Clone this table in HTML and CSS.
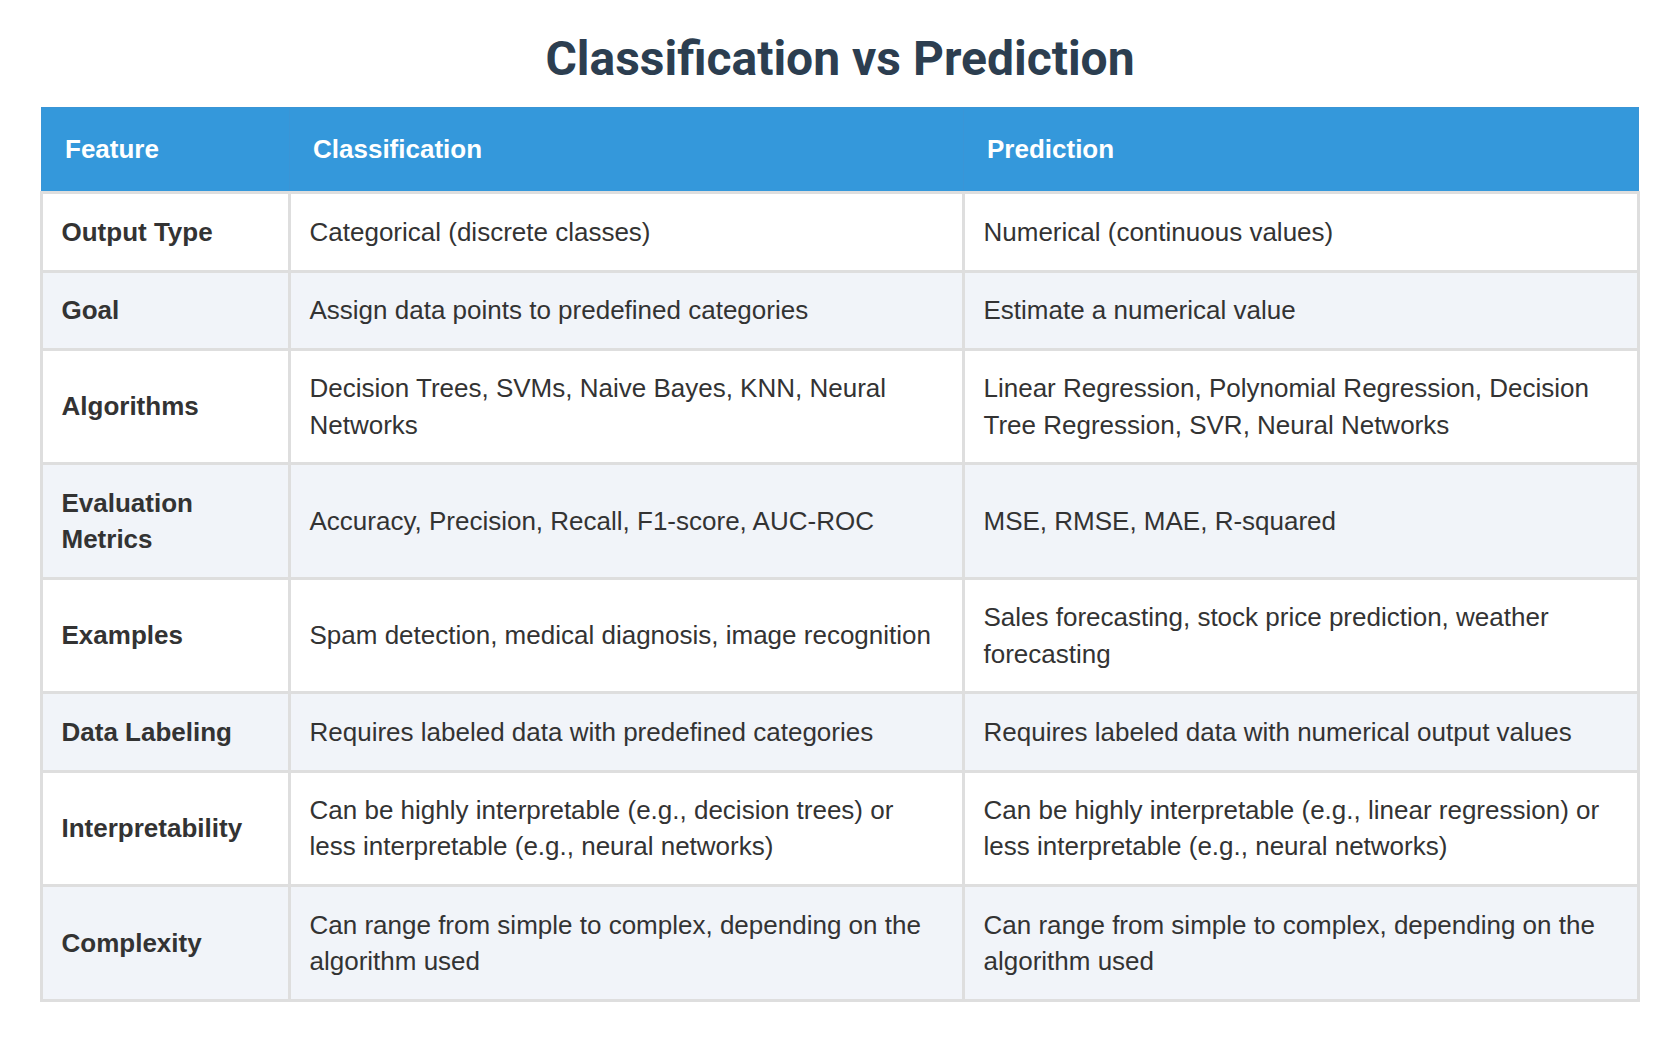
FILE: index.html
```html
<!DOCTYPE html>
<html lang="en">
<head>
<meta charset="utf-8">
<title>Classification vs Prediction</title>
<link rel="stylesheet" href="styles.css">
</head>
<body>
<div class="page">
  <h1 class="title">Classification vs Prediction</h1>
  <table class="cmp">
    <colgroup>
      <col class="c1">
      <col class="c2">
      <col class="c3">
    </colgroup>
    <thead>
      <tr><th>Feature</th><th>Classification</th><th>Prediction</th></tr>
    </thead>
    <tbody>
      <tr><td class="lbl">Output Type</td><td>Categorical (discrete classes)</td><td>Numerical (continuous values)</td></tr>
      <tr><td class="lbl">Goal</td><td>Assign data points to predefined categories</td><td>Estimate a numerical value</td></tr>
      <tr><td class="lbl">Algorithms</td><td>Decision Trees, SVMs, Naive Bayes, KNN, Neural Networks</td><td>Linear Regression, Polynomial Regression, Decision Tree Regression, SVR, Neural Networks</td></tr>
      <tr><td class="lbl">Evaluation Metrics</td><td>Accuracy, Precision, Recall, F1-score, AUC-ROC</td><td>MSE, RMSE, MAE, R-squared</td></tr>
      <tr><td class="lbl">Examples</td><td>Spam detection, medical diagnosis, image recognition</td><td>Sales forecasting, stock price prediction, weather forecasting</td></tr>
      <tr><td class="lbl">Data Labeling</td><td>Requires labeled data with predefined categories</td><td>Requires labeled data with numerical output values</td></tr>
      <tr><td class="lbl">Interpretability</td><td>Can be highly interpretable (e.g., decision trees) or less interpretable (e.g., neural networks)</td><td>Can be highly interpretable (e.g., linear regression) or less interpretable (e.g., neural networks)</td></tr>
      <tr><td class="lbl">Complexity</td><td>Can range from simple to complex, depending on the algorithm used</td><td>Can range from simple to complex, depending on the algorithm used</td></tr>
    </tbody>
  </table>
</div>
</body>
</html>
```
FILE: styles.css
```css
html, body {
  margin: 0;
  padding: 0;
  background: #ffffff;
}
body {
  font-family: "Liberation Sans", Arial, sans-serif;
  color: #333333;
}
.page {
  padding: 0 40px;
}
.title {
  font-family: Roboto, "Liberation Sans", sans-serif;
  font-weight: 700;
  font-size: 48px;
  line-height: 56px;
  color: #2c3e50;
  text-align: center;
  margin: 31px 0 20px;
}
.cmp {
  width: 100%;
  border-collapse: collapse;
  table-layout: fixed;
  font-size: 26px;
  line-height: 36.25px;
}
.c1 { width: 248px; }
.c2 { width: 674px; }
.cmp th {
  background: #3498db;
  color: #ffffff;
  font-weight: 700;
  text-align: left;
  padding: 22.5px 24px 24.5px 23px;
  border: 1px solid #3a95d6;
  border-bottom: 3px solid #dedede;
}
.cmp td {
  padding: 19.5px 19px 19.5px 18.5px;
  border: 3px solid #dedede;
  vertical-align: middle;
  text-align: left;
}
.cmp td.lbl {
  font-weight: 700;
}
.cmp tbody tr:nth-child(even) td {
  background: #f1f4f9;
}
```
